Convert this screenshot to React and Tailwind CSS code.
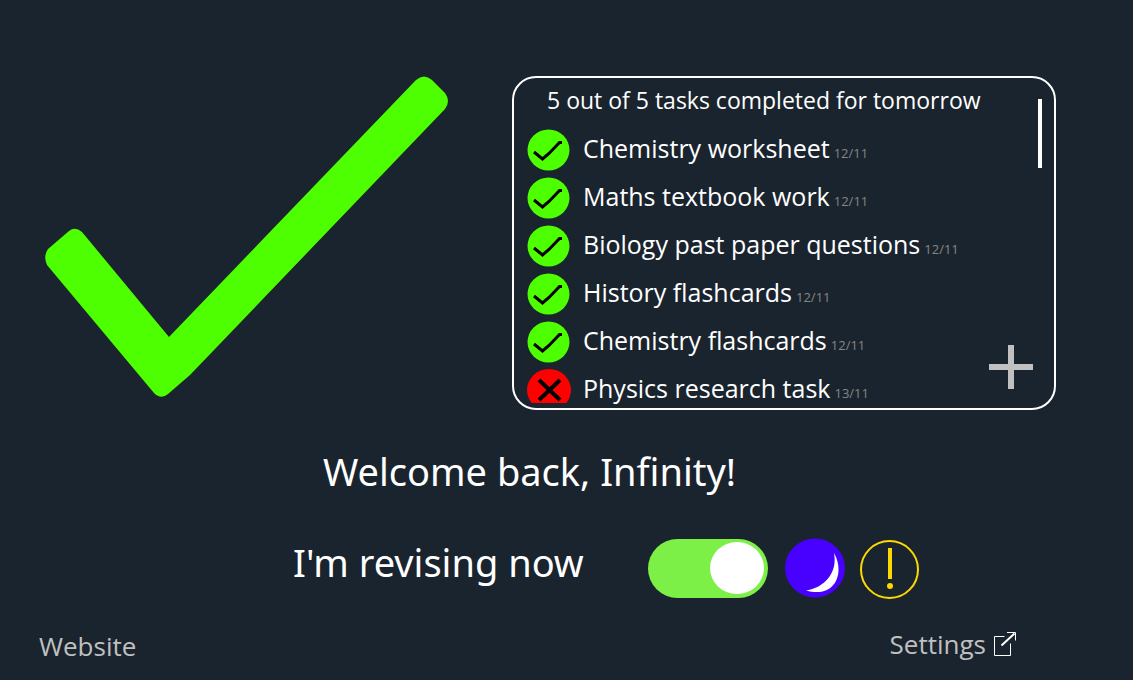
import React from "react";

const tasks = [
  { name: "Chemistry worksheet", due: "12/11", done: true },
  { name: "Maths textbook work", due: "12/11", done: true },
  { name: "Biology past paper questions", due: "12/11", done: true },
  { name: "History flashcards", due: "12/11", done: true },
  { name: "Chemistry flashcards", due: "12/11", done: true },
  { name: "Physics research task", due: "13/11", done: false },
];

function BigTick() {
  return (
    <svg viewBox="0 0 403 321" className="h-auto w-full" aria-hidden="true">
      <path
        fill="#4dff00"
        d="M3 173 L24 155 Q30 150 37 156 L124 261 L371 4 Q379 -3 387 4 L400 17 Q406 25 400 33 L145 299 L123 318 Q116 324 109 317 L2 189 Q-2 180 3 173 Z"
      />
    </svg>
  );
}

function StatusIcon({ done }) {
  return done ? (
    <svg width="43" height="42" viewBox="0 0 43 42" className="pointer-events-none col-start-1 row-start-1" aria-hidden="true">
      <ellipse cx="21.5" cy="21" rx="21" ry="20.5" fill="#4dff00" />
      <path d="M7 23 L15.500 30 L22 24.500 L32.500 13.500 H35" fill="none" stroke="#000" strokeWidth="3" />
    </svg>
  ) : (
    <svg width="44" height="34" viewBox="0 0 44 34" className="pointer-events-none col-start-1 row-start-1" aria-hidden="true">
      <ellipse cx="22" cy="21" rx="22" ry="21" fill="#ff0000" />
      <path d="M12 11 L33 31 M33 11 L12 31" fill="none" stroke="#000" strokeWidth="4" />
    </svg>
  );
}

function Task({ name, due, done }) {
  return (
    <li className="h-12">
      <label className="flex items-start gap-3">
        <span className="grid w-11 shrink-0 pt-[2px]">
          <input type="checkbox" defaultChecked={done} className="col-start-1 row-start-1 appearance-none" />
          <StatusIcon done={done} />
        </span>
        <span className="flex items-baseline gap-1 whitespace-nowrap">
          <span className="text-[25px] leading-[42px] text-white">{name}</span>
          <span className="text-[13px] text-[#858585]">{due}</span>
        </span>
      </label>
    </li>
  );
}

export default function App() {
  return (
    <div className="flex min-h-screen flex-col bg-[#1a242e] font-['Open_Sans',sans-serif] text-white">
      <main className="flex flex-col">
        <div className="grid grid-cols-[403fr_544fr] items-start gap-16 pt-[76px] pr-[77px] pl-[45px]">
          <div className="min-w-0">
            <BigTick />
          </div>
          <section className="flex min-w-0 justify-between rounded-[24px] border-2 border-white pl-[13px]">
            <div className="min-w-0">
              <h2 className="pl-5 text-[23px] leading-[44px] whitespace-nowrap">5 out of 5 tasks completed for tomorrow</h2>
              <ul className="mt-[5px] h-[281px] overflow-hidden">
                {tasks.map((t) => (
                  <Task key={t.name} {...t} />
                ))}
              </ul>
            </div>
            <div className="flex shrink-0 flex-col items-end justify-between pt-[21px] pb-[19px]">
              <div className="mr-3 h-[69px] w-1 bg-white" />
              <button type="button" aria-label="Add task" className="mr-[21px]">
                <svg width="44" height="44" viewBox="0 0 44 44" className="block" aria-hidden="true">
                  <path d="M22 0 V44 M0 22 H44" stroke="#c0c0c0" strokeWidth="6" />
                </svg>
              </button>
            </div>
          </section>
        </div>

        <h1 className="mt-[33px] pl-[323px] font-['Noto_Sans',sans-serif] text-[38px] leading-[56px] whitespace-nowrap">
          Welcome back, Infinity!
        </h1>

        <div className="mt-[39px] flex items-center pl-[293px]">
          <label
            htmlFor="revising"
            className="w-[355px] pb-3 font-['Noto_Sans',sans-serif] text-[38px] leading-[48px] whitespace-nowrap"
          >
            I'm revising now
          </label>
          <span className="grid">
            <input
              id="revising"
              type="checkbox"
              role="switch"
              defaultChecked
              className="col-start-1 row-start-1 h-[59px] w-[120px] appearance-none rounded-full bg-[#7df048]"
            />
            <span className="pointer-events-none col-start-1 row-start-1 mr-1 h-[52px] w-[54px] self-center justify-self-end rounded-[50%] bg-white" />
          </span>
          <button type="button" aria-label="Night mode" className="ml-[17px]">
            <svg width="60" height="60" viewBox="0 0 60 60" className="block" aria-hidden="true">
              <ellipse cx="30" cy="30" rx="30" ry="29.500" fill="#4800ff" />
              <path d="M49 15 C60 34 51 61 21 52.500 C38 50 53 36 49 15 Z" fill="#fff" />
            </svg>
          </button>
          <button type="button" aria-label="Alerts" className="ml-[15px]">
            <svg width="59" height="60" viewBox="0 -1 59 60" className="block overflow-visible" aria-hidden="true">
              <circle cx="29.500" cy="30.500" r="28.500" fill="none" stroke="#ffd800" strokeWidth="2" />
              <rect x="28" y="9" width="4" height="31" fill="#ffd800" />
              <circle cx="30" cy="47" r="3" fill="#ffd800" />
            </svg>
          </button>
        </div>
      </main>

      <footer className="mt-auto flex items-end justify-between pr-[117px] pb-[14px] pl-[39px] text-[26px] leading-[40px] text-[#c0c0c0]">
        <a href="#website">Website</a>
        <a href="#settings" className="flex items-center gap-2 pb-[2px]">
          Settings
          <svg width="22" height="24" viewBox="0 0 22 24" aria-hidden="true">
            <path d="M10.500 4.500 H0.500 V23.500 H16.500 V11.500 M13 0.500 H21.500 V8.500" fill="none" stroke="#fff" strokeWidth="1" />
            <path d="M7.500 13.500 L20.500 1.500" stroke="#fff" strokeWidth="2" />
          </svg>
        </a>
      </footer>
    </div>
  );
}
